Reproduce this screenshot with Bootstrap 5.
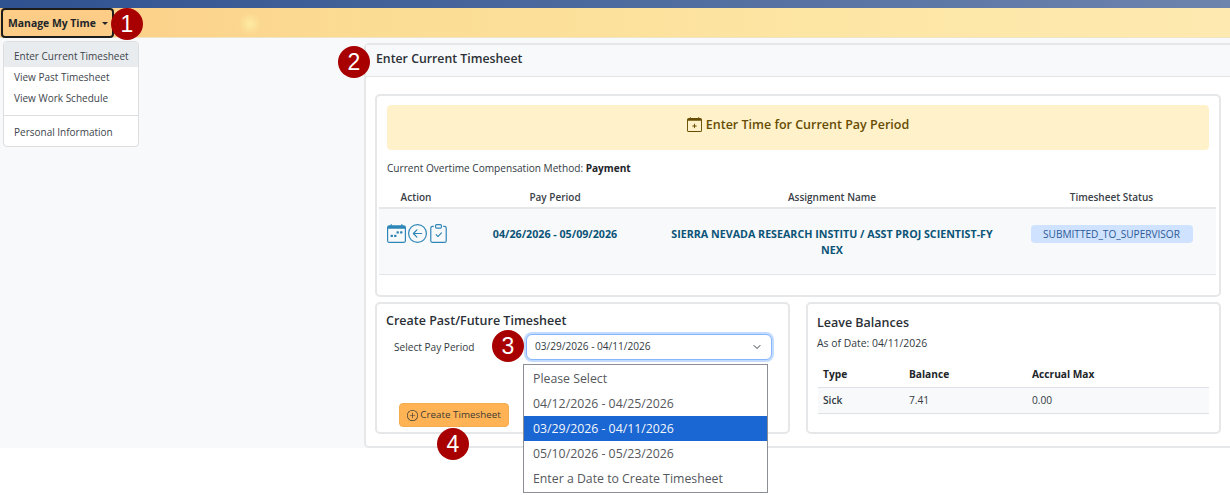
<!DOCTYPE html>
<html lang="en">
<head>
  <meta charset="UTF-8" />
  <title>Enter Current Timesheet</title>
  <meta name="viewport" content="width=device-width, initial-scale=1" />
  <link href="https://cdn.jsdelivr.net/npm/bootstrap@5.3.2/dist/css/bootstrap.min.css" rel="stylesheet" />
  <style>
    body {
      background-color: #fff;
      font-family: "Open Sans", "Noto Sans", sans-serif;
      font-size: 10.1px;
      color: #333a42;
      height: 495px;
      overflow: hidden;
    }
    .top-strip { height: 8px; background: linear-gradient(90deg, #2f5290, #6d84ad); }
    .time-nav {
      height: 30px;
      padding: 0;
      align-items: stretch;
      background:
        radial-gradient(circle at 250px 16px, rgba(255, 238, 165, .9) 0, rgba(255, 238, 165, 0) 11px),
        linear-gradient(90deg, #fdcb85 0%, #fbdc93 30%, #fde6a5 70%, #fee9b0 100%);
      border-bottom: 1px solid #f1e4c5;
    }
    .time-btn {
      width: 113px;
      height: 30px;
      padding: 2px 0 0 5px;
      font-size: 10.4px;
      font-weight: 700;
      text-align: left;
      color: #212529;
      background: #fdcd87;
      border: 2px solid #1c1c1c;
      border-radius: 4px;
      margin-left: 1px;
    }
    .time-btn::after { margin-left: 6px; }
    .page-area { height: 410px; background: #f8f9fa; }
    .side-col { width: 364px; flex: none; padding: 3px 0 0 3px; }
    .side-menu {
      position: static;
      display: block;
      width: 136px;
      min-width: 0;
      height: 106px;
      padding: 0;
      font-size: 10px;
      border-color: #dcdee0;
      border-radius: 4px;
      overflow: hidden;
    }
    .side-menu .dropdown-item { padding: 0 10px; height: 21px; line-height: 18px; color: #3d444c; }
    .side-menu .dropdown-item:last-child { line-height: 20px; }
    .side-menu .dropdown-item.active { background: #e9ecef; height: 25px; line-height: 29px; margin-bottom: 1px; color: #3d444c; }
    .side-menu .dropdown-divider { margin: 5px 0 6px; border-color: #dcdee0; opacity: 1; }
    .main-col { flex: 1; padding-top: 5px; min-width: 0; }
    .main-panel {
      height: 405px;
      margin-right: -6px;
      border: 2px solid #e6e7e8;
      border-radius: 5px;
      background: #fff;
    }
    .main-head {
      height: 32px;
      padding: 0 10px;
      line-height: 27px;
      font-size: 12.3px;
      font-weight: 600;
      background: #f8f9fa;
      border-bottom: 1px solid #e4e5e6;
      color: #2b3036;
    }
    .main-body { padding: 17px 9px 0; width: 864px; }
    .box-panel { border: 2px solid #e6e7e8; border-radius: 5px; background: #fff; }
    .current-box { height: 203px; padding: 9px 3px 0 2px; }
    .enter-alert {
      height: 45px;
      margin: 0 7px 0 8px;
      padding: 0 0 4px;
      font-size: 12.5px;
      font-weight: 600;
      color: #664d03;
      background: #fff1c9;
      border: 1px solid #fff1c9;
      border-radius: 4px;
    }
    .enter-alert svg { margin-top: -2px; }
    .method-line { margin: 11px 0 0 8px; line-height: 15px; }
    .method-line b { color: #212529; }
    .sheet-table { margin: 6px 0 0; font-size: 10px; table-layout: fixed; }
    .sheet-table th {
      height: 26px;
      padding: 0 0 2px;
      font-weight: 600;
      text-align: center;
      color: #3a4047;
      border-bottom: 2px solid #e6e7e8;
    }
    .sheet-table td { height: 66px; padding: 0; background: #f8f9fa; text-align: center; color: #0b5478; font-size: 10.7px; line-height: 16px; font-weight: 700; border-bottom: 1px solid #e4e5e6; }
    .sheet-table td.pad-top { padding-top: 14px; vertical-align: top; }
    .act-icons { padding-left: 8px; padding-top: 1px; gap: 2px; color: #2e86b8; }
    .sheet-text { padding-top: 3px; }
    .status-pill {
      display: inline-block;
      width: 162px;
      height: 18px;
      line-height: 19px;
      margin-top: 2px;
      border-radius: 4px;
      font-size: 10.1px;
      font-weight: 400;
      color: #2d5a96;
      background: #cfe2ff;
    }
    .lower-row { gap: 16px; margin-top: 5px; }
    .create-box { width: 415px; height: 132px; flex: none; padding: 8px 9px; }
    .leave-box { width: 415px; height: 132px; flex: none; padding: 10px 10px; }
    .box-title { font-size: 12.5px; font-weight: 600; line-height: 17px; color: #2b3036; }
    .pay-label { width: 140px; flex: none; padding: 1px 0 0 8px; }
    .pay-row { margin-top: 5px; }
    .pay-select {
      width: 246px;
      height: 26px;
      padding: 0 0 0 8px;
      font-size: 10.1px;
      color: #333a42;
      border-color: #86b7fe;
      box-shadow: 0 0 0 2px rgba(13, 110, 253, .25);
      font-family: inherit;
      background-size: 10px 8px;
      background-position: right 9px center;
    }
    .create-btn {
      width: 110px;
      height: 24px;
      padding: 0;
      margin: 43px 0 0 13px;
      font-size: 9.8px;
      color: #3d3a33;
      background: #ffb355;
      border: 1px solid #f5ab4f;
      border-radius: 4px;
      gap: 2px;
    }
    .leave-box .box-title { margin-left: -1px; }
    .as-of { margin: 5px 0 0 -1px; line-height: 15px; font-size: 10.4px; }
    .leave-table { margin: 11px 0 0; font-size: 10.2px; table-layout: fixed; }
    .leave-table th { height: 25px; padding: 1px 5px 0; font-weight: 700; color: #212529; border-bottom: 1px solid #dee2e6; vertical-align: middle; }
    .leave-table td { height: 26px; padding: 2px 5px 0; background: #f8f9fa; color: #333a42; border-bottom: 1px solid #dee2e6; vertical-align: middle; }
    .leave-table td:first-child { font-weight: 600; }
    .num-dot {
      position: absolute;
      width: 32px;
      height: 32px;
      line-height: 32px;
      border-radius: 50%;
      text-align: center;
      font-family: "Liberation Sans", sans-serif;
      font-size: 23px;
      color: #fff;
      background: #a80000;
      z-index: 5;
    }
    .dot-a { left: 111px; top: 8px; }
    .dot-b { left: 338px; top: 46px; }
    .dot-c { left: 492px; top: 330px; }
    .dot-d { left: 437px; top: 428px; }
    .pay-list {
      position: absolute;
      left: 523px;
      top: 364px;
      width: 245px;
      height: 129px;
      padding-top: 1px;
      background: #fff;
      border: 1px solid #8b8e92;
      z-index: 4;
      font-size: 12.3px;
      font-weight: 500;
      color: #55585c;
    }
    .pay-list div { height: 25px; line-height: 26px; padding-left: 9px; }
    .pay-list .picked { background: #1a66d2; color: #f4f7fc; }
  </style>
</head>
<body>
  <div class="top-strip"></div>
  <nav class="navbar time-nav">
    <button type="button" class="btn dropdown-toggle time-btn">Manage My Time</button>
  </nav>

  <div class="page-area d-flex">
    <div class="side-col">
      <div class="dropdown-menu side-menu">
        <a class="dropdown-item active" href="#">Enter Current Timesheet</a>
        <a class="dropdown-item" href="#">View Past Timesheet</a>
        <a class="dropdown-item" href="#">View Work Schedule</a>
        <hr class="dropdown-divider" />
        <a class="dropdown-item" href="#">Personal Information</a>
      </div>
    </div>

    <div class="main-col">
      <div class="main-panel">
        <div class="main-head">Enter Current Timesheet</div>
        <div class="main-body">
          <div class="box-panel current-box">
            <div class="alert enter-alert d-flex align-items-center justify-content-center gap-1">
              <svg width="15" height="15" viewBox="0 0 16 16" fill="currentColor">
                <path d="M8 7a.5.5 0 0 1 .5.5V9H10a.5.5 0 0 1 0 1H8.5v1.5a.5.5 0 0 1-1 0V10H6a.5.5 0 0 1 0-1h1.5V7.5A.5.5 0 0 1 8 7z"/>
                <path d="M3.5 0a.5.5 0 0 1 .5.5V1h8V.5a.5.5 0 0 1 1 0V1h1a2 2 0 0 1 2 2v11a2 2 0 0 1-2 2H2a2 2 0 0 1-2-2V3a2 2 0 0 1 2-2h1V.5a.5.5 0 0 1 .5-.5zM1 4v10a1 1 0 0 0 1 1h12a1 1 0 0 0 1-1V4H1z"/>
              </svg>
              <span>Enter Time for Current Pay Period</span>
            </div>
            <div class="method-line">Current Overtime Compensation Method: <b>Payment</b></div>
            <table class="table sheet-table">
              <colgroup><col style="width: 74px" /><col style="width: 204px" /><col style="width: 350px" /><col /></colgroup>
              <thead>
                <tr><th>Action</th><th>Pay Period</th><th>Assignment Name</th><th>Timesheet Status</th></tr>
              </thead>
              <tbody>
                <tr>
                  <td class="pad-top">
                    <div class="d-flex act-icons">
                      <svg width="19" height="19" viewBox="0 0 16 16" fill="currentColor">
                        <path d="M11 6.5a.5.5 0 0 1 .5-.5h1a.5.5 0 0 1 .5.5v1a.5.5 0 0 1-.5.5h-1a.5.5 0 0 1-.5-.5v-1zm-3 0a.5.5 0 0 1 .5-.5h1a.5.5 0 0 1 .5.5v1a.5.5 0 0 1-.5.5h-1a.5.5 0 0 1-.5-.5v-1zm-5 3a.5.5 0 0 1 .5-.5h1a.5.5 0 0 1 .5.5v1a.5.5 0 0 1-.5.5h-1a.5.5 0 0 1-.5-.5v-1zm3 0a.5.5 0 0 1 .5-.5h1a.5.5 0 0 1 .5.5v1a.5.5 0 0 1-.5.5h-1a.5.5 0 0 1-.5-.5v-1z"/>
                        <path d="M3.5 0a.5.5 0 0 1 .5.5V1h8V.5a.5.5 0 0 1 1 0V1h1a2 2 0 0 1 2 2v11a2 2 0 0 1-2 2H2a2 2 0 0 1-2-2V3a2 2 0 0 1 2-2h1V.5a.5.5 0 0 1 .5-.5zM1 4v10a1 1 0 0 0 1 1h12a1 1 0 0 0 1-1V4H1z"/>
                      </svg>
                      <svg width="19" height="19" viewBox="0 0 16 16" fill="currentColor">
                        <path fill-rule="evenodd" d="M1 8a7 7 0 1 0 14 0A7 7 0 0 0 1 8zm15 0A8 8 0 1 1 0 8a8 8 0 0 1 16 0zm-4.5-.5a.5.5 0 0 1 0 1H5.707l2.147 2.146a.5.5 0 0 1-.708.708l-3-3a.5.5 0 0 1 0-.708l3-3a.5.5 0 1 1 .708.708L5.707 7.5H11.5z"/>
                      </svg>
                      <svg width="19" height="19" viewBox="0 0 16 16" fill="currentColor">
                        <path fill-rule="evenodd" d="M10.854 7.146a.5.5 0 0 1 0 .708l-3 3a.5.5 0 0 1-.708 0l-1.5-1.5a.5.5 0 1 1 .708-.708L7.5 9.793l2.646-2.647a.5.5 0 0 1 .708 0z"/>
                        <path d="M4 1.5H3a2 2 0 0 0-2 2V14a2 2 0 0 0 2 2h10a2 2 0 0 0 2-2V3.5a2 2 0 0 0-2-2h-1v1h1a1 1 0 0 1 1 1V14a1 1 0 0 1-1 1H3a1 1 0 0 1-1-1V3.5a1 1 0 0 1 1-1h1v-1z"/>
                        <path d="M9.5 1a.5.5 0 0 1 .5.5v1a.5.5 0 0 1-.5.5h-3a.5.5 0 0 1-.5-.5v-1a.5.5 0 0 1 .5-.5h3zm-3-1A1.5 1.5 0 0 0 5 1.5v1A1.5 1.5 0 0 0 6.5 4h3A1.5 1.5 0 0 0 11 2.5v-1A1.5 1.5 0 0 0 9.5 0h-3z"/>
                      </svg>
                    </div>
                  </td>
                  <td class="pad-top"><div class="sheet-text">04/26/2026 - 05/09/2026</div></td>
                  <td class="pad-top"><div class="sheet-text">SIERRA NEVADA RESEARCH INSTITU / ASST PROJ SCIENTIST-FY<br />NEX</div></td>
                  <td class="pad-top"><span class="status-pill">SUBMITTED_TO_SUPERVISOR</span></td>
                </tr>
              </tbody>
            </table>
          </div>

          <div class="d-flex lower-row">
            <div class="box-panel create-box">
              <div class="box-title">Create Past/Future Timesheet</div>
              <div class="d-flex align-items-center pay-row">
                <label class="pay-label">Select Pay Period</label>
                <select class="form-select pay-select"><option>03/29/2026 - 04/11/2026</option></select>
              </div>
              <button type="button" class="btn create-btn d-flex align-items-center justify-content-center">
                <svg width="11" height="11" viewBox="0 0 16 16" fill="currentColor">
                  <path d="M8 15A7 7 0 1 1 8 1a7 7 0 0 1 0 14zm0 1A8 8 0 1 0 8 0a8 8 0 0 0 0 16z"/>
                  <path d="M8 4a.5.5 0 0 1 .5.5v3h3a.5.5 0 0 1 0 1h-3v3a.5.5 0 0 1-1 0v-3h-3a.5.5 0 0 1 0-1h3v-3A.5.5 0 0 1 8 4z"/>
                </svg>
                <span>Create Timesheet</span>
              </button>
            </div>
            <div class="box-panel leave-box">
              <div class="box-title">Leave Balances</div>
              <div class="as-of">As of Date: 04/11/2026</div>
              <table class="table leave-table">
                <colgroup><col style="width: 86px" /><col style="width: 123px" /><col /></colgroup>
                <thead><tr><th>Type</th><th>Balance</th><th>Accrual Max</th></tr></thead>
                <tbody><tr><td>Sick</td><td>7.41</td><td>0.00</td></tr></tbody>
              </table>
            </div>
          </div>
        </div>
      </div>
    </div>
  </div>

  <div class="pay-list">
    <div>Please Select</div>
    <div>04/12/2026 - 04/25/2026</div>
    <div class="picked">03/29/2026 - 04/11/2026</div>
    <div>05/10/2026 - 05/23/2026</div>
    <div>Enter a Date to Create Timesheet</div>
  </div>

  <span class="num-dot dot-a">1</span>
  <span class="num-dot dot-b">2</span>
  <span class="num-dot dot-c">3</span>
  <span class="num-dot dot-d">4</span>

  <script src="https://cdn.jsdelivr.net/npm/bootstrap@5.3.2/dist/js/bootstrap.bundle.min.js"></script>
</body>
</html>
